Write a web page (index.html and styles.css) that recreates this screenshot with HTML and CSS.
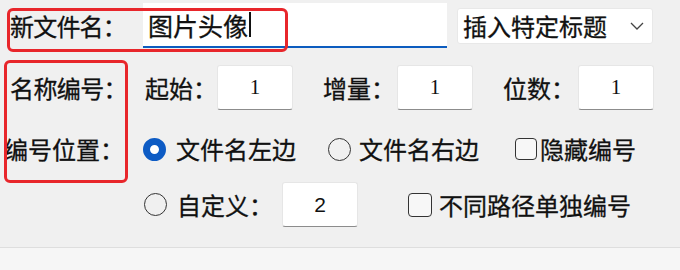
FILE: index.html
```html
<!DOCTYPE html>
<html lang="zh">
<head>
<meta charset="utf-8">
<link rel="stylesheet" href="styles.css">
</head>
<body>
<div class="panel">
  <div class="row row1">
    <span class="lbl lbl-main">新文件名：</span>
    <div class="textbox"><span>图片头像</span><span class="caret"></span></div>
    <div class="select"><span>插入特定标题</span>
      <svg class="chev" width="14" height="8" viewBox="0 0 14 8"><polyline points="1,1 7,7 13,1" fill="none" stroke="#444" stroke-width="1.3"/></svg>
    </div>
  </div>
  <div class="row row2">
    <span class="lbl lbl-main">名称编号：</span>
    <span class="lbl w-start">起始：</span>
    <div class="num serif">1</div>
    <span class="lbl w-inc">增量：</span>
    <div class="num serif">1</div>
    <span class="lbl w-dig">位数：</span>
    <div class="num serif">1</div>
  </div>
  <div class="row row3">
    <span class="lbl lbl-pos">编号位置：</span>
    <span class="radio on"></span><span class="lbl opt1">文件名左边</span>
    <span class="radio"></span><span class="lbl opt2">文件名右边</span>
    <span class="check"></span><span class="lbl">隐藏编号</span>
  </div>
  <div class="row row4">
    <span class="radio"></span><span class="lbl opt3">自定义：</span>
    <div class="num sans">2</div>
    <span class="check check2"></span><span class="lbl">不同路径单独编号</span>
  </div>
  <div class="mark mark1"></div>
  <div class="mark mark2"></div>
</div>
<div class="foot"></div>
</body>
</html>
```
FILE: styles.css
```css
html, body {
  margin: 0;
  padding: 0;
}
body {
  width: 680px;
  height: 270px;
  overflow: hidden;
  background: #f6f6f6;
  font-family: "Noto Sans CJK SC", "Noto Sans", sans-serif;
  color: #111;
}
.panel {
  position: relative;
  height: 248px;
  background: #f0f0f0;
  border-bottom: 1px solid #dedede;
  box-sizing: border-box;
  overflow: hidden;
}
.row {
  display: flex;
  align-items: center;
}
.lbl {
  font-size: 24px;
  line-height: 1;
  white-space: nowrap;
  -webkit-text-stroke: 0.3px #111;
}
.row1 {
  margin-top: 3px;
  height: 45px;
  padding-left: 10px;
}
.row1 .lbl-main {
  width: 133px;
  letter-spacing: -0.8px;
}
.textbox {
  width: 304px;
  height: 45px;
  box-sizing: border-box;
  background: #fff;
  border-bottom: 2px solid #0c5cbf;
  display: flex;
  align-items: center;
  padding-left: 5px;
  font-size: 25px;
  -webkit-text-stroke: 0.3px #111;
}
.caret {
  display: inline-block;
  width: 2px;
  height: 25px;
  background: #111;
  margin-left: 1px;
}
.select {
  margin-left: 10px;
  width: 196px;
  height: 36px;
  box-sizing: border-box;
  background: #fff;
  border: 1px solid #e8e8e8;
  border-radius: 3px;
  display: flex;
  align-items: center;
  padding-left: 5px;
  font-size: 24px;
  -webkit-text-stroke: 0.3px #111;
}
.chev {
  margin-left: auto;
  margin-right: 8px;
}
.row2 {
  margin-top: 17px;
  height: 45px;
  padding-left: 10px;
}
.row2 .lbl-main {
  width: 135px;
  letter-spacing: -0.6px;
}
.w-start { width: 72px; }
.w-inc { width: 74px; margin-left: 30px; }
.w-dig { width: 75px; margin-left: 30px; }
.num {
  width: 76px;
  height: 45px;
  box-sizing: border-box;
  background: #fff;
  border: 1px solid #e6e6e6;
  border-bottom: 1px solid #8c8c8c;
  border-radius: 3px;
  display: flex;
  align-items: center;
  justify-content: center;
}
.serif {
  font-family: "Liberation Serif", serif;
  font-size: 21px;
}
.sans {
  font-family: "Liberation Sans", sans-serif;
  font-size: 21px;
}
.row3 {
  margin-top: 26px;
  height: 26px;
  padding-left: 4px;
}
.lbl-pos {
  width: 139px;
}
.radio {
  width: 23px;
  height: 23px;
  box-sizing: border-box;
  border: 1.5px solid #333;
  border-radius: 50%;
  flex: none;
}
.radio.on {
  border: 7.5px solid #0d5bc4;
  background: #fff;
}
.opt1 { margin-left: 10px; width: 152px; }
.opt2 { margin-left: 8px; width: 156px; }
.check {
  width: 22px;
  height: 22px;
  box-sizing: border-box;
  border: 1.5px solid #333;
  border-radius: 4px;
  background: #f7f7f7;
  flex: none;
  margin-right: 3px;
}
.row4 {
  margin-top: 20px;
  height: 45px;
  padding-left: 144px;
}
.opt3 { margin-left: 10px; width: 105px; }
.check2 {
  margin-left: 50px;
  width: 24px;
  height: 24px;
  margin-right: 7px;
}
.mark {
  position: absolute;
  border: 3px solid #e8262b;
  border-radius: 6px;
  box-sizing: border-box;
}
.mark1 {
  left: 7px;
  top: 8px;
  width: 281px;
  height: 44px;
}
.mark2 {
  left: 4px;
  top: 60px;
  width: 124px;
  height: 123px;
}
.foot {
  height: 22px;
}
```
